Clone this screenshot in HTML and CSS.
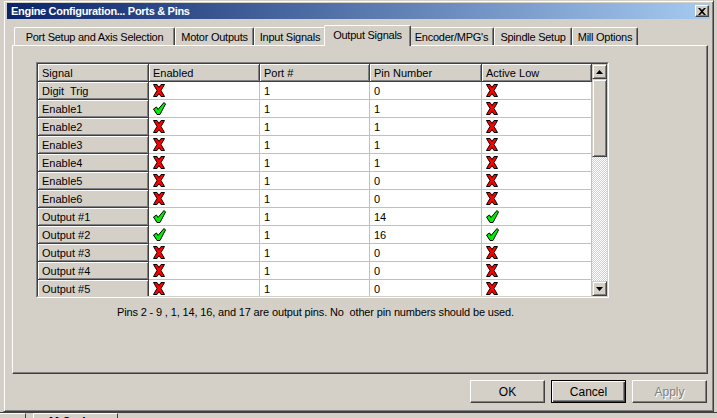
FILE: index.html
```html
<!DOCTYPE html>
<html lang="en">
<head>
<meta charset="UTF-8">
<link rel="stylesheet" href="styles.css">
<title>Engine Configuration... Ports &amp; Pins</title>
</head>
<body>
<div class="screen">

  <div class="dialog">
    <div class="titlebar">
      <span class="title">Engine Configuration... Ports &amp; Pins</span>
      <button class="close-btn">
        <svg width="8" height="7" viewBox="0 0 8 7"><path d="M0,0 H2 L4,2 L6,0 H8 L5,3.5 L8,7 H6 L4,5 L2,7 H0 L3,3.5 Z" fill="#000"/></svg>
      </button>
    </div>

    <div class="tabs">
      <div class="tab t1">Port Setup and Axis Selection</div>
      <div class="tab t2">Motor Outputs</div>
      <div class="tab t3">Input Signals</div>
      <div class="tab selected">Output Signals</div>
      <div class="tab t5">Encoder/MPG's</div>
      <div class="tab t6">Spindle Setup</div>
      <div class="tab t7">Mill Options</div>
    </div>

    <div class="panel">
      <div class="grid-frame">
        <div class="grid-inner">
          <div class="grid" id="grid">
            <div class="head">Signal</div>
            <div class="head">Enabled</div>
            <div class="head">Port #</div>
            <div class="head">Pin Number</div>
            <div class="head">Active Low</div>
          </div>
          <div class="vscroll">
            <div class="sbtn">
              <svg width="7" height="4" viewBox="0 0 7 4"><path d="M3.5,0 L7,4 H0 Z" fill="#000"/></svg>
            </div>
            <div class="thumb"></div>
            <div class="track"></div>
            <div class="sbtn">
              <svg width="7" height="4" viewBox="0 0 7 4"><path d="M0,0 H7 L3.5,4 Z" fill="#000"/></svg>
            </div>
          </div>
        </div>
      </div>
      <p class="note">Pins 2 - 9 , 1, 14, 16, and 17 are output pins. No&nbsp; other pin numbers should be used.</p>
    </div>

    <div class="buttons">
      <button class="btn">OK</button>
      <button class="btn default">Cancel</button>
      <button class="btn disabled">Apply</button>
    </div>
  </div>

  <!-- window underneath the dialog -->
  <div class="under">
    <div class="under-tab small"></div>
    <div class="under-tab">M Codes</div>
  </div>

</div>

<!-- red cross / green tick used by the Enabled and Active Low columns -->
<template id="icon-no">
  <svg class="ico" width="12" height="13" viewBox="0 0 12 13"><path d="M0.5,0.5 H4 L6,3.5 L8,0.5 H11.5 L8,6.5 L11.5,12.5 H8 L6,9.5 L4,12.5 H0.5 L4,6.5 Z" fill="#ff0000" stroke="#000" stroke-width="1"/></svg>
</template>
<template id="icon-yes">
  <svg class="ico" width="13" height="13" viewBox="0 0 13 13"><path d="M0.5,7 L3.5,5 L5,7.5 L11,0.5 L12.5,2 L7,12.5 H4 Z" fill="#00ee00" stroke="#000" stroke-width="1"/></svg>
</template>

<script>
  const rows = [
    ['Digit\u00a0 Trig', 0, 1, '0', 0],
    ['Enable1', 1, 1, '1', 0],
    ['Enable2', 0, 1, '1', 0],
    ['Enable3', 0, 1, '1', 0],
    ['Enable4', 0, 1, '1', 0],
    ['Enable5', 0, 1, '0', 0],
    ['Enable6', 0, 1, '0', 0],
    ['Output #1', 1, 1, '14', 1],
    ['Output #2', 1, 1, '16', 1],
    ['Output #3', 0, 1, '0', 0],
    ['Output #4', 0, 1, '0', 0],
    ['Output #5', 0, 1, '0', 0]
  ];

  const grid = document.getElementById('grid');

  function cell(cls, content) {
    const div = document.createElement('div');
    div.className = cls;
    if (typeof content === 'string') {
      div.textContent = content;
    } else {
      div.appendChild(content);
    }
    grid.appendChild(div);
  }

  function icon(on) {
    const tpl = document.getElementById(on ? 'icon-yes' : 'icon-no');
    return tpl.content.cloneNode(true);
  }

  rows.forEach(r => {
    cell('name', r[0]);
    cell('cell', icon(r[1]));
    cell('cell', String(r[2]));
    cell('cell', r[3]);
    cell('cell', icon(r[4]));
  });
</script>
</body>
</html>
```

FILE: styles.css
```css
body {
  margin: 0;
  width: 717px;
  height: 418px;
  overflow: hidden;
  background: #d4d0c8;
  font-family: "Liberation Sans", Arial, sans-serif;
  font-size: 11px;
  color: #000;
}

.screen {
  height: 418px;
  overflow: hidden;
}

/* classic raised window frame */
.dialog {
  box-sizing: border-box;
  width: 711px;
  height: 412px;
  margin-left: 3px;
  padding: 2px 3px 0 3px;
  border: 1px solid;
  border-color: #d4d0c8 #404040 #404040 #d4d0c8;
  box-shadow: inset 1px 1px #fff, inset -1px -1px #808080;
  background: #d4d0c8;
  display: flex;
  flex-direction: column;
}

.titlebar {
  height: 16px;
  display: flex;
  align-items: center;
  justify-content: space-between;
  background: linear-gradient(to right, #0a246a, #a6caf0);
}

.title {
  color: #fff;
  font-weight: bold;
  font-size: 11px;
  padding-left: 4px;
  letter-spacing: -0.3px;
}

.close-btn {
  box-sizing: border-box;
  width: 14px;
  height: 12px;
  margin-right: 1px;
  padding: 0;
  display: flex;
  align-items: center;
  justify-content: center;
  background: #d4d0c8;
  border: 1px solid;
  border-color: #fff #404040 #404040 #fff;
  box-shadow: inset -1px -1px #808080;
}

/* tab strip */
.tabs {
  display: flex;
  align-items: flex-end;
  height: 20px;
  margin: 6px 0 0 7px;
  position: relative;
  z-index: 1;
  letter-spacing: -0.25px;
}

.tab {
  box-sizing: border-box;
  height: 18px;
  padding-top: 3px;
  text-align: center;
  white-space: nowrap;
  border-top: 1px solid #fff;
  border-left: 1px solid #fff;
  border-right: 1px solid #404040;
  border-radius: 2px 2px 0 0;
  box-shadow: inset -1px 0 #808080;
}

.t1 { width: 161px; }
.t2 { width: 79px; }
.t3 { width: 72px; }
.t5 { width: 85px; }
.t6 { width: 78px; }
.t7 { width: 66px; }

.tab.selected {
  width: 87px;
  height: 21px;
  margin: 0 -2px -1px -2px;
  padding-top: 3px;
  background: #d4d0c8;
  position: relative;
}

.panel {
  box-sizing: border-box;
  width: 696px;
  height: 329px;
  margin-left: 5px;
  padding: 16px 0 0 23px;
  border: 1px solid;
  border-color: #fff #404040 #404040 #fff;
  box-shadow: inset -1px -1px #808080;
}

/* sunken grid frame */
.grid-frame {
  width: 571px;
  border: 1px solid;
  border-color: #808080 #fff #fff #808080;
}

.grid-inner {
  display: flex;
  height: 232px;
  border: 1px solid;
  border-color: #404040 #d4d0c8 #d4d0c8 #404040;
}

.grid {
  width: 554px;
  height: 232px;
  overflow: hidden;
  display: grid;
  grid-template-columns: 111px 111px 110px 112px 110px;
  grid-auto-rows: 18px;
  background: #fff;
}

.head,
.name {
  box-sizing: border-box;
  padding: 3px 0 0 4px;
  background: #d4d0c8;
  border-right: 1px solid #404040;
  border-bottom: 1px solid #404040;
  box-shadow: inset 1px 1px #fff, inset -1px -1px #808080;
  white-space: nowrap;
}

.cell {
  box-sizing: border-box;
  padding: 3px 0 0 4px;
  border-right: 1px solid #c0c0c0;
  border-bottom: 1px solid #c0c0c0;
  white-space: nowrap;
}

.ico {
  display: block;
  margin-top: -1px;
}

/* vertical scrollbar */
.vscroll {
  width: 15px;
  display: flex;
  flex-direction: column;
}

.sbtn,
.thumb {
  box-sizing: border-box;
  background: #d4d0c8;
  border: 1px solid;
  border-color: #d4d0c8 #404040 #404040 #d4d0c8;
  box-shadow: inset 1px 1px #fff, inset -1px -1px #808080;
}

.sbtn {
  height: 15px;
  display: flex;
  align-items: center;
  justify-content: center;
}

.thumb {
  height: 78px;
}

.track {
  flex: 1;
  background: repeating-conic-gradient(#fff 0 25%, #d4d0c8 0 50%) 0 0 / 2px 2px;
}

.note {
  margin: 8px 0 0 81px;
  font-size: 11px;
  letter-spacing: -0.15px;
}

/* dialog buttons */
.buttons {
  display: flex;
  justify-content: flex-end;
  gap: 6px;
  margin: 6px 3px 0 0;
}

.btn {
  box-sizing: border-box;
  width: 75px;
  height: 23px;
  padding: 0;
  font-family: "Liberation Sans", Arial, sans-serif;
  font-size: 12px;
  color: #000;
  background: #d4d0c8;
  border: 1px solid;
  border-color: #fff #404040 #404040 #fff;
  box-shadow: inset -1px -1px #808080;
}

.btn.default {
  border: 1px solid #000;
  box-shadow: inset 1px 1px #fff, inset -1px -1px #404040, inset -2px -2px #808080;
}

.btn.disabled {
  color: #808080;
  text-shadow: 1px 1px #fff;
}

/* background window peeking out below */
.under {
  display: flex;
  gap: 7px;
  height: 6px;
  border-top: 1px solid #404040;
}

.under-tab {
  box-sizing: border-box;
  width: 85px;
  height: 20px;
  padding: 1px 0 0 15px;
  border-top: 1px solid #fff;
  border-left: 1px solid #fff;
  border-right: 1px solid #404040;
  font-weight: bold;
  font-size: 12px;
}

.under-tab.small {
  width: 26px;
  border-left: 0;
}
```
